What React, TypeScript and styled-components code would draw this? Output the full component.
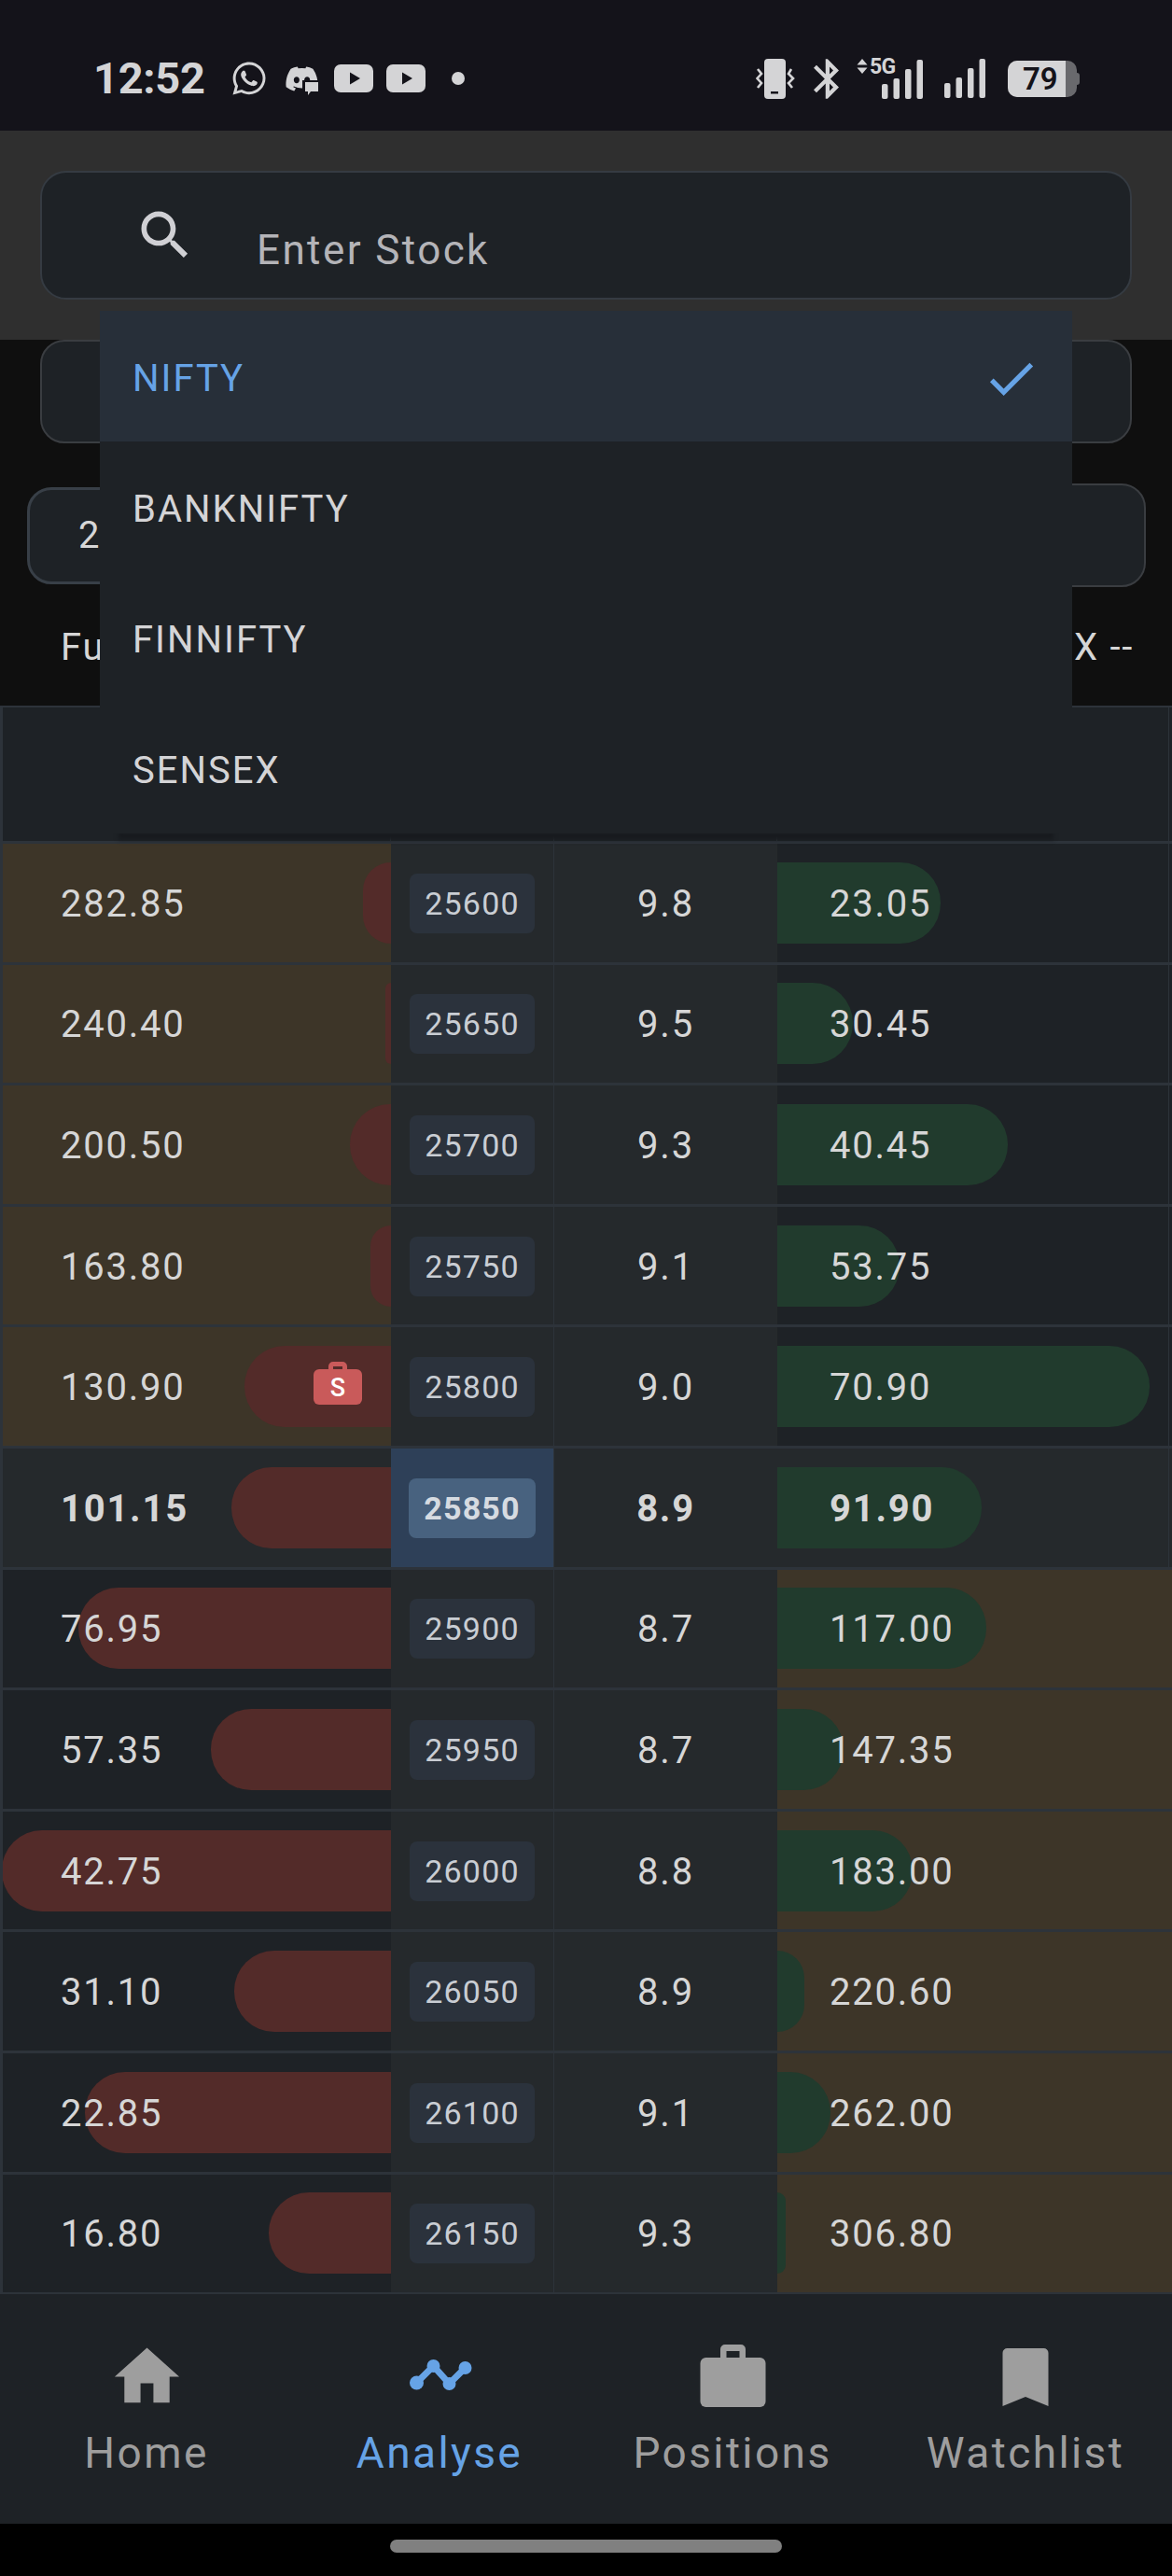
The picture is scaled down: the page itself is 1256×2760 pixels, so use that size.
import React from "react";
import styled, { createGlobalStyle } from "styled-components";
import { FaWhatsapp, FaDiscord } from "react-icons/fa";

const Global = createGlobalStyle`
  html, body { margin: 0; padding: 0; background: #000; }
  * { box-sizing: border-box; }
  #root { width: 1256px; height: 2760px; overflow: hidden; }
`;

const Page = styled.div`
  position: relative;
  width: 1256px;
  height: 2760px;
  background: #0f0f0f;
  font-family: Roboto, "Liberation Sans", sans-serif;
  color: #d6d6d6;
  overflow: hidden;
`;

/* ---------- status bar ---------- */
const StatusBar = styled.div`
  height: 140px;
  background: #14131a;
  padding: 28px 99px 0 100px;
  display: flex;
  align-items: center;
  justify-content: space-between;
  color: #d4d4d6;
`;
const StatusGroup = styled.div`
  display: flex;
  align-items: center;
`;
const Clock = styled.span`
  font-size: 47px;
  font-weight: 700;
  width: 116px;
  letter-spacing: -0.3px;
  line-height: 56px;
  margin-right: 31px;
  white-space: nowrap;
`;
const IconSlot = styled.span<{ $gap: number }>`
  display: inline-flex;
  position: relative;
  margin-right: ${(p) => p.$gap}px;
  align-items: center;
  justify-content: center;
`;
const NotifyDot = styled.span`
  width: 14px;
  height: 14px;
  border-radius: 50%;
  background: #d4d4d6;
`;
const ChatBadge = styled.svg`
  position: absolute;
  right: 0;
  bottom: 0;
`;
const NetworkBox = styled.span`
  position: relative;
  display: inline-block;
  width: 71px;
  height: 43px;
  margin-right: 23px;
`;
const FiveG = styled.span`
  position: absolute;
  left: 14px;
  top: -3px;
  font-size: 23px;
  line-height: 24px;
  font-weight: 700;
  letter-spacing: -0.8px;
`;
const ArrowGlyph = styled.svg`
  position: absolute;
  left: 0;
  top: -1px;
`;
const BarsGlyph = styled.svg`
  position: absolute;
  right: 0;
  bottom: 0;
`;
const Battery = styled.span`
  position: relative;
  width: 74px;
  height: 39px;
  border-radius: 10px;
  background: #69696d;
  display: flex;
  margin-right: 3px;
  &::after {
    content: "";
    position: absolute;
    right: -3px;
    top: 13px;
    width: 3px;
    height: 13px;
    border-radius: 0 3px 3px 0;
    background: #69696d;
  }
`;
const BatteryFill = styled.span`
  width: 62px;
  height: 39px;
  border-radius: 10px 0 0 10px;
  background: #d4d4d6;
  color: #14131a;
  font-size: 33px;
  font-weight: 600;
  line-height: 40px;
  padding-left: 16px;
`;

/* ---------- search ---------- */
const SearchBand = styled.div`
  height: 224px;
  background: #2f2f2f;
  padding: 43px 43px 0;
`;
const SearchBox = styled.div`
  height: 138px;
  background: #1e2226;
  border: 2px solid #353b42;
  border-radius: 28px;
  display: flex;
  align-items: center;
  padding-left: 98px;
  gap: 64px;
`;
const SearchPlaceholder = styled.span`
  font-size: 44px;
  letter-spacing: 2.4px;
  color: #b4b4b8;
  padding-top: 32px;
`;

/* ---------- selectors ---------- */
const SelectorBox = styled.div`
  height: 111px;
  margin: 0 43px;
  background: #1e2226;
  border: 2px solid #3a3d41;
  border-radius: 26px;
`;
const DateRow = styled.div`
  margin-top: 43px;
  height: 111px;
  padding: 0 28px 0 29px;
  display: flex;
  align-items: center;
  gap: 20px;
`;
const DateBox = styled.div<{ $side: "left" | "right" }>`
  flex: 1;
  height: ${(p) => (p.$side === "left" ? 104 : 111)}px;
  background: #1e2226;
  border: ${(p) => (p.$side === "left" ? "3px solid #383f47" : "2px solid #3a3d41")};
  border-radius: 26px;
  display: flex;
  align-items: center;
  justify-content: ${(p) => (p.$side === "left" ? "flex-start" : "flex-end")};
  padding: ${(p) => (p.$side === "left" ? "0 0 0 52px" : "0 74px 0 0")};
  font-size: 40px;
  letter-spacing: 1.75px;
`;
const InfoRow = styled.div`
  height: 127px;
  padding: 2px 41px 0 65px;
  display: flex;
  align-items: center;
  justify-content: space-between;
  font-size: 40px;
  letter-spacing: 1.75px;
  color: #d6d6d6;
`;

/* ---------- table ---------- */
const Table = styled.div`
  border-left: 3px solid #2d333a;
  border-bottom: 2px solid #2d333a;
  background: #1e2226;
`;
const HeaderRow = styled.div`
  height: 145px;
  border-top: 2px solid #2d333a;
  display: grid;
  grid-template-columns: 416px 175px 239px 1fr;
`;
const HeaderCell = styled.div<{ $last?: boolean }>`
  border-right: 1px solid #2d333a;
  margin-right: ${(p) => (p.$last ? 3 : 0)}px;
`;
const Row = styled.div`
  height: 129.6px;
  border-top: 3px solid #2d333a;
  display: grid;
  grid-template-columns: 416px 175px 239px 1fr;
`;
const PriceCell = styled.div<{ $itm: boolean; $atm: boolean; $side: "call" | "put" }>`
  position: relative;
  display: flex;
  align-items: center;
  overflow: hidden;
  padding-left: ${(p) => (p.$side === "call" ? 62 : 56)}px;
  padding-top: 2px;
  background: ${(p) => (p.$itm ? "#3d3528" : p.$atm ? "#25292c" : "#1e2226")};
  ${(p) =>
    p.$side === "put" && !p.$itm
      ? `&::after { content: ""; position: absolute; top: 0; bottom: 0; right: 3px; width: 1px; background: #2d333a; }`
      : ""}
`;
const OiBar = styled.div<{ $side: "call" | "put" }>`
  position: absolute;
  top: 50%;
  height: 87px;
  margin-top: -43.5px;
  ${(p) =>
    p.$side === "call"
      ? "right: 0; background: #532b29; border-radius: 43px 0 0 43px;"
      : "left: 0; background: #213b2d; border-radius: 0 43px 43px 0;"}
`;
const Value = styled.span<{ $bold: boolean }>`
  position: relative;
  font-size: 40px;
  letter-spacing: 1.75px;
  font-weight: ${(p) => (p.$bold ? 700 : 400)};
  color: #d6d6d6;
`;
const StrikeCell = styled.div<{ $atm: boolean }>`
  display: flex;
  align-items: center;
  justify-content: center;
  padding-top: 1px;
  background: ${(p) => (p.$atm ? "#2e4058" : "#25292c")};
  border-right: 1px solid #2d333a;
`;
const StrikeChip = styled.span<{ $atm: boolean }>`
  display: inline-block;
  padding: 0 16px;
  height: 64px;
  line-height: 65px;
  border-radius: 8px;
  font-size: 34px;
  letter-spacing: 1.2px;
  font-weight: ${(p) => (p.$atm ? 700 : 400)};
  background: ${(p) => (p.$atm ? "#48627f" : "#2b323c")};
  color: ${(p) => (p.$atm ? "#d6dbe1" : "#c9cdd3")};
`;
const IvCell = styled.div`
  display: flex;
  align-items: center;
  justify-content: center;
  padding-top: 2px;
  background: #25292c;
`;
const PositionBadge = styled.svg`
  position: absolute;
  right: 31px;
  top: 50%;
  margin-top: -28px;
`;

/* ---------- nav ---------- */
const Nav = styled.div`
  height: 246px;
  background: #1e2226;
  display: grid;
  grid-template-columns: repeat(4, 314px);
  padding-top: 47px;
`;
const NavItem = styled.div<{ $active?: boolean }>`
  display: flex;
  flex-direction: column;
  align-items: center;
  color: ${(p) => (p.$active ? "#66a3e6" : "#9e9e9e")};
`;
const NavLabel = styled.span`
  font-size: 46px;
  letter-spacing: 2.4px;
  line-height: 54px;
  margin-top: 13px;
`;
const GestureArea = styled.div`
  height: 56px;
  background: #000;
  display: flex;
  justify-content: center;
  padding-top: 17px;
`;
const GestureBar = styled.div`
  width: 420px;
  height: 14px;
  border-radius: 7px;
  background: #808080;
`;

/* ---------- dropdown ---------- */
const Dropdown = styled.div`
  position: absolute;
  left: 107px;
  top: 333px;
  width: 1042px;
  height: 560px;
  background: #1e2226;
  box-shadow: 0 27px 4px -20px #181b1f;
  display: flex;
  flex-direction: column;
`;
const DropdownItem = styled.div<{ $selected?: boolean }>`
  height: 140px;
  display: flex;
  align-items: center;
  justify-content: space-between;
  padding: 4px 34px 0 35px;
  font-size: 40px;
  letter-spacing: 2px;
  background: ${(p) => (p.$selected ? "#272f39" : "transparent")};
  color: ${(p) => (p.$selected ? "#66a3e6" : "#d4d4d6")};
`;

type R = { c: string; k: string; iv: string; p: string; cb: number; pb: number; cItm: boolean; pItm: boolean; atm?: boolean; pos?: boolean };
const rows: R[] = [
  { c: "282.85", k: "25600", iv: "9.8", p: "23.05", cb: 30, pb: 175, cItm: true, pItm: false },
  { c: "240.40", k: "25650", iv: "9.5", p: "30.45", cb: 6, pb: 81, cItm: true, pItm: false },
  { c: "200.50", k: "25700", iv: "9.3", p: "40.45", cb: 44, pb: 247, cItm: true, pItm: false },
  { c: "163.80", k: "25750", iv: "9.1", p: "53.75", cb: 22, pb: 131, cItm: true, pItm: false },
  { c: "130.90", k: "25800", iv: "9.0", p: "70.90", cb: 157, pb: 399, cItm: true, pItm: false, pos: true },
  { c: "101.15", k: "25850", iv: "8.9", p: "91.90", cb: 171, pb: 219, cItm: false, pItm: false, atm: true },
  { c: "76.95", k: "25900", iv: "8.7", p: "117.00", cb: 335, pb: 224, cItm: false, pItm: true },
  { c: "57.35", k: "25950", iv: "8.7", p: "147.35", cb: 193, pb: 71, cItm: false, pItm: true },
  { c: "42.75", k: "26000", iv: "8.8", p: "183.00", cb: 417, pb: 145, cItm: false, pItm: true },
  { c: "31.10", k: "26050", iv: "8.9", p: "220.60", cb: 168, pb: 29, cItm: false, pItm: true },
  { c: "22.85", k: "26100", iv: "9.1", p: "262.00", cb: 328, pb: 57, cItm: false, pItm: true },
  { c: "16.80", k: "26150", iv: "9.3", p: "306.80", cb: 131, pb: 9, cItm: false, pItm: true },
];

const YouTubeIcon = () => (
  <svg width="42" height="30" viewBox="0 0 42 30">
    <rect width="42" height="30" rx="7" fill="#d4d4d6" />
    <path d="M17 8.5 L28 15 L17 21.5 Z" fill="#14131a" />
  </svg>
);

const VibrateIcon = () => (
  <svg width="42" height="43" viewBox="0 0 42 43">
    <rect x="9" y="0" width="23" height="43" rx="4" fill="#d4d4d6" />
    <rect x="16" y="35" width="8" height="2.5" fill="#14131a" />
    <path d="M2 11 L6 16 L1.5 21 L6 26 L2 31" fill="none" stroke="#d4d4d6" strokeWidth="2.6" />
    <path d="M38 11 L35 16 L40 21 L35 26 L39 31" fill="none" stroke="#d4d4d6" strokeWidth="2.6" />
  </svg>
);

const BluetoothIcon = () => (
  <svg width="27" height="43" viewBox="5 2 12.71 20" fill="#d4d4d6">
    <path d="M17.71 7.71L12 2h-1v7.59L6.41 5 5 6.41 10.59 12 5 17.59 6.41 19 11 14.41V22h1l5.71-5.71-4.3-4.29 4.3-4.29zM13 5.83l1.88 1.88L13 9.59V5.83zm1.88 10.46L13 18.17v-3.76l1.88 1.88z" />
  </svg>
);

const SignalBars = () => (
  <svg width="44" height="42" viewBox="0 0 44 42" fill="#d4d4d6">
    <rect x="0" y="26" width="6.5" height="16" rx="2" />
    <rect x="12.5" y="20" width="6.5" height="22" rx="2" />
    <rect x="25" y="10" width="6.5" height="32" rx="2" />
    <rect x="37.5" y="0" width="6.5" height="42" rx="2" />
  </svg>
);

const App = () => (
  <Page>
    <Global />
    <StatusBar>
      <StatusGroup>
        <Clock>12:52</Clock>
        <IconSlot $gap={18}>
          <FaWhatsapp size={40} />
        </IconSlot>
        <IconSlot $gap={16}>
          <FaDiscord size={37} />
          <ChatBadge width="18" height="18" viewBox="0 0 18 18">
            <path d="M0 1 H18 V18 H0 Z" fill="#14131a" />
            <path d="M3 3 H17 V13 H9 L6 17 V13 H3 Z" fill="#d4d4d6" />
          </ChatBadge>
        </IconSlot>
        <IconSlot $gap={14}>
          <YouTubeIcon />
        </IconSlot>
        <IconSlot $gap={28}>
          <YouTubeIcon />
        </IconSlot>
        <NotifyDot />
      </StatusGroup>
      <StatusGroup>
        <IconSlot $gap={20}>
          <VibrateIcon />
        </IconSlot>
        <IconSlot $gap={19}>
          <BluetoothIcon />
        </IconSlot>
        <NetworkBox>
          <ArrowGlyph width="12" height="18" viewBox="0 0 12 18" fill="#d4d4d6">
            <path d="M6 1 L11.5 7.5 H0.5 Z M6 17 L11.5 10.5 H0.5 Z" />
          </ArrowGlyph>
          <FiveG>5G</FiveG>
          <BarsGlyph width="44" height="42" viewBox="0 0 44 42" fill="#d4d4d6">
            <rect x="0" y="26" width="6.5" height="16" rx="2" />
            <rect x="12.5" y="20" width="6.5" height="22" rx="2" />
            <rect x="25" y="10" width="6.5" height="32" rx="2" />
            <rect x="37.5" y="0" width="6.5" height="42" rx="2" />
          </BarsGlyph>
        </NetworkBox>
        <IconSlot $gap={24}>
          <SignalBars />
        </IconSlot>
        <Battery>
          <BatteryFill>79</BatteryFill>
        </Battery>
      </StatusGroup>
    </StatusBar>

    <SearchBand>
      <SearchBox>
        <svg width="68" height="68" viewBox="0 0 24 24" fill="#d0d0d4">
          <path d="M15.5 14h-.79l-.28-.27C15.41 12.59 16 11.11 16 9.5 16 5.91 13.09 3 9.5 3S3 5.91 3 9.5 5.91 16 9.5 16c1.61 0 3.09-.59 4.23-1.57l.27.28v.79l5 4.99L20.49 19l-4.99-5zm-6 0C7.01 14 5 11.99 5 9.5S7.01 5 9.5 5 14 7.01 14 9.5 11.99 14 9.5 14z" />
        </svg>
        <SearchPlaceholder>Enter Stock</SearchPlaceholder>
      </SearchBox>
    </SearchBand>

    <SelectorBox />
    <DateRow>
      <DateBox $side="left">2</DateBox>
      <DateBox $side="right">8</DateBox>
    </DateRow>
    <InfoRow>
      <span>Fu</span>
      <span>VIX --</span>
    </InfoRow>

    <Table>
      <HeaderRow>
        <HeaderCell />
        <HeaderCell />
        <HeaderCell />
        <HeaderCell $last />
      </HeaderRow>
      {rows.map((r) => (
        <Row key={r.k}>
          <PriceCell $side="call" $itm={r.cItm} $atm={!!r.atm}>
            <OiBar $side="call" style={{ width: r.cb }}>
              {r.pos && (
                <PositionBadge width="52" height="48" viewBox="0 0 52 48">
                  <path d="M16 10 V6 a5 5 0 0 1 5-5 h10 a5 5 0 0 1 5 5 V10 h-5 V6 h-10 V10 Z" fill="#c95a5a" />
                  <rect x="0" y="9" width="52" height="38" rx="6" fill="#c95a5a" />
                  <text x="26" y="38" textAnchor="middle" fontFamily="Roboto, sans-serif" fontSize="27" fontWeight="500" fill="#ffffff">S</text>
                </PositionBadge>
              )}
            </OiBar>
            <Value $bold={!!r.atm}>{r.c}</Value>
          </PriceCell>
          <StrikeCell $atm={!!r.atm}>
            <StrikeChip $atm={!!r.atm}>{r.k}</StrikeChip>
          </StrikeCell>
          <IvCell>
            <Value $bold={!!r.atm}>{r.iv}</Value>
          </IvCell>
          <PriceCell $side="put" $itm={r.pItm} $atm={!!r.atm}>
            <OiBar $side="put" style={{ width: r.pb }} />
            <Value $bold={!!r.atm}>{r.p}</Value>
          </PriceCell>
        </Row>
      ))}
    </Table>

    <Nav>
      <NavItem>
        <svg width="83" height="83" viewBox="0 0 24 24" fill="currentColor">
          <path d="M10 20v-6h4v6h5v-8h3L12 3 2 12h3v8z" />
        </svg>
        <NavLabel>Home</NavLabel>
      </NavItem>
      <NavItem $active>
        <svg width="83" height="83" viewBox="0 0 83 83" fill="currentColor">
          <path d="M16.5 48 L34.5 30 L51.5 49 L68.5 32" fill="none" stroke="currentColor" strokeWidth="7" />
          <circle cx="16.5" cy="48" r="7.5" />
          <circle cx="34.5" cy="30" r="7" />
          <circle cx="51.5" cy="49" r="7" />
          <circle cx="68.5" cy="32" r="7" />
        </svg>
        <NavLabel>Analyse</NavLabel>
      </NavItem>
      <NavItem>
        <svg width="83" height="83" viewBox="0 0 83 83" fill="currentColor">
          <path d="M28 21 V12 a5 5 0 0 1 5-5 h17 a5 5 0 0 1 5 5 V21 h-6.5 V14 h-14 V21 Z" />
          <rect x="6.5" y="21" width="70" height="53" rx="6" />
        </svg>
        <NavLabel>Positions</NavLabel>
      </NavItem>
      <NavItem>
        <svg width="83" height="83" viewBox="0 0 83 83" fill="currentColor">
          <path d="M21.5 11 H60.5 a5 5 0 0 1 5 5 V73 L41 63 L16.5 73 V16 a5 5 0 0 1 5-5 Z" />
        </svg>
        <NavLabel>Watchlist</NavLabel>
      </NavItem>
    </Nav>
    <GestureArea>
      <GestureBar />
    </GestureArea>

    <Dropdown>
      <DropdownItem $selected>
        <span>NIFTY</span>
        <svg width="63" height="63" viewBox="0 0 24 24" fill="#66a3e6">
          <path d="M9 16.17L4.83 12l-1.42 1.41L9 19 21 7l-1.41-1.41z" />
        </svg>
      </DropdownItem>
      <DropdownItem><span>BANKNIFTY</span></DropdownItem>
      <DropdownItem><span>FINNIFTY</span></DropdownItem>
      <DropdownItem><span>SENSEX</span></DropdownItem>
    </Dropdown>
  </Page>
);

export default App;
